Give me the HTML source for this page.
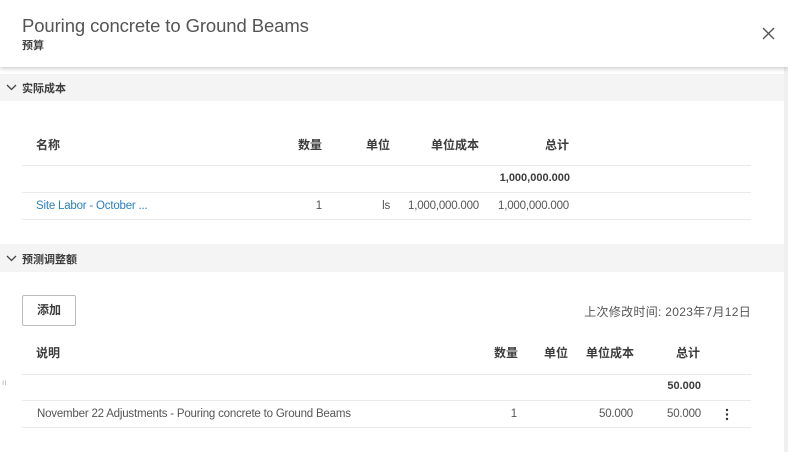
<!DOCTYPE html>
<html><head><meta charset="utf-8"><style>
*{margin:0;padding:0;box-sizing:border-box}
body{width:788px;height:452px;overflow:hidden;background:#fff;font-family:"Liberation Sans","Noto Sans CJK SC",sans-serif;color:#3c3c3c;position:relative}
.a{position:absolute;white-space:nowrap}
.hdr{position:absolute;left:0;top:0;width:788px;height:67px;background:#fff;box-shadow:0 2px 4px rgba(0,0,0,.18);z-index:2}
.bar{position:absolute;left:0;width:784px;background:#f4f4f4}
.ln{position:absolute;left:22px;width:729px;height:1px;background:#eaeaea}
.h{font-size:12px;font-weight:bold;color:#3c3c3c}
.t{font-size:11.5px;color:#555;letter-spacing:-0.2px}
.r{text-align:right}
</style></head><body>
<div class="hdr">
<div class="a" style="left:22px;top:15px;font-size:18.5px;color:#555;letter-spacing:-0.1px">Pouring concrete to Ground Beams</div>
<div class="a" style="left:22px;top:37px;font-size:11px;font-weight:bold;color:#444">预算</div>
<svg class="a" style="left:762px;top:27px" width="13" height="13" viewBox="0 0 13 13"><path d="M1 1L12 12M12 1L1 12" stroke="#555" stroke-width="1.4"/></svg>
</div>
<div style="position:absolute;right:0;top:67px;width:4px;height:385px;background:#f0f0f0"></div>
<div class="bar" style="top:74px;height:27px"></div>
<svg class="a" style="left:6px;top:84px" width="11" height="7" viewBox="0 0 11 7"><path d="M1 1L5.5 5.5L10 1" stroke="#444" stroke-width="1.3" fill="none"/></svg>
<div class="a h" style="left:22px;top:80px;font-size:11px">实际成本</div>

<div class="a h" style="left:36px;top:136px">名称</div>
<div class="a h r" style="left:280px;width:42px;top:136px">数量</div>
<div class="a h r" style="left:350px;width:40px;top:136px">单位</div>
<div class="a h r" style="left:410px;width:69px;top:136px">单位成本</div>
<div class="a h r" style="left:500px;width:69px;top:136px">总计</div>
<div class="ln" style="top:165px"></div>
<div class="a h r" style="left:470px;width:100px;top:172px;font-size:11px">1,000,000.000</div>
<div class="ln" style="top:192px"></div>
<div class="a t" style="left:36px;top:200px;color:#2a7fc0">Site Labor - October ...</div>
<div class="a t r" style="left:290px;width:32px;top:200px">1</div>
<div class="a t r" style="left:360px;width:30px;top:200px">ls</div>
<div class="a t r" style="left:390px;width:89px;top:200px">1,000,000.000</div>
<div class="a t r" style="left:480px;width:89px;top:200px">1,000,000.000</div>
<div class="ln" style="top:219px"></div>

<div class="bar" style="top:244px;height:28px"></div>
<svg class="a" style="left:6px;top:255px" width="11" height="7" viewBox="0 0 11 7"><path d="M1 1L5.5 5.5L10 1" stroke="#444" stroke-width="1.3" fill="none"/></svg>
<div class="a h" style="left:22px;top:251px;font-size:11px">预测调整额</div>

<div class="a" style="left:22px;top:295px;width:54px;height:31px;border:1px solid #bbb;border-radius:2px;font-size:12px;font-weight:bold;text-align:center;line-height:29px">添加</div>
<div class="a r" style="left:540px;width:211px;top:303px;font-size:12px;color:#555;letter-spacing:0.3px">上次修改时间: 2023年7月12日</div>

<div class="a h" style="left:36px;top:344px">说明</div>
<div class="a h r" style="left:480px;width:38px;top:344px">数量</div>
<div class="a h r" style="left:530px;width:38px;top:344px">单位</div>
<div class="a h r" style="left:570px;width:64px;top:344px">单位成本</div>
<div class="a h r" style="left:650px;width:50px;top:344px">总计</div>
<div class="ln" style="top:374px"></div>
<div class="a" style="left:2px;top:378px;font-size:8px;color:#aaa">ıı</div>
<div class="a h r" style="left:640px;width:61px;top:380px;font-size:11px">50.000</div>
<div class="ln" style="top:400px"></div>
<div class="a t" style="left:37px;top:408px">November 22 Adjustments - Pouring concrete to Ground Beams</div>
<div class="a t r" style="left:490px;width:27px;top:408px">1</div>
<div class="a t r" style="left:570px;width:63px;top:408px">50.000</div>
<div class="a t r" style="left:640px;width:61px;top:408px">50.000</div>
<svg class="a" style="left:725px;top:408px" width="4" height="13" viewBox="0 0 4 13"><circle cx="2" cy="2" r="1.2" fill="#333"/><circle cx="2" cy="6.5" r="1.2" fill="#333"/><circle cx="2" cy="11" r="1.2" fill="#333"/></svg>
<div class="ln" style="top:427px"></div>
</body></html>
